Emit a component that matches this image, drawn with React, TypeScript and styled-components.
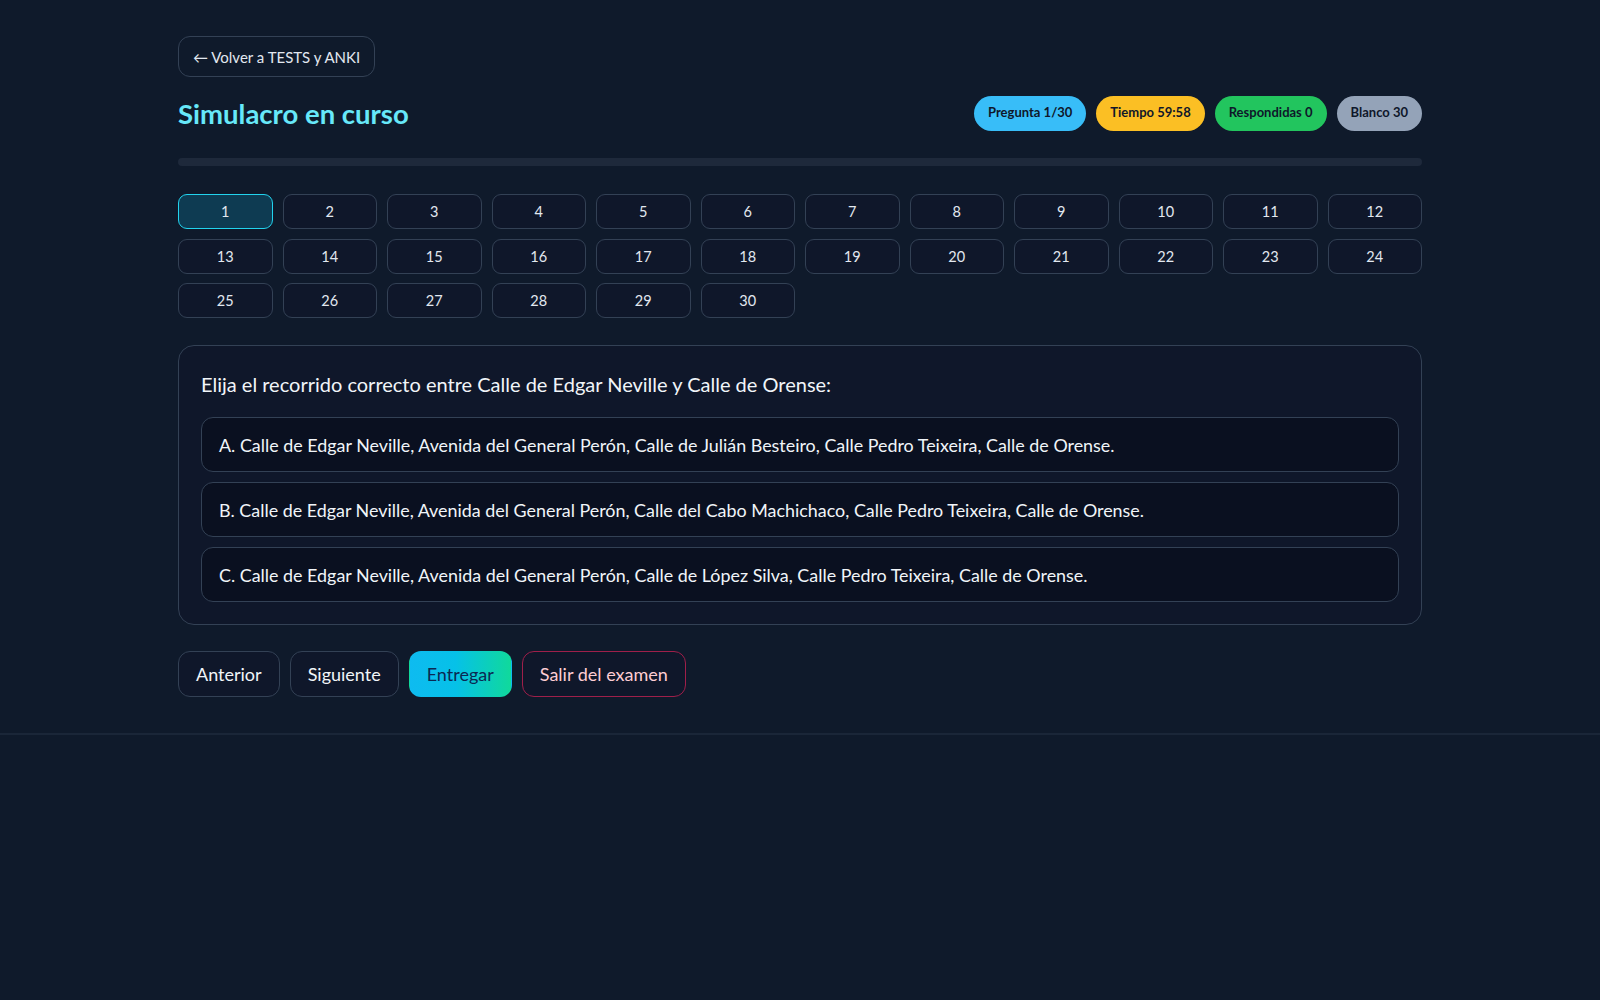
import styled, { createGlobalStyle } from 'styled-components';

const GlobalStyle = createGlobalStyle({
  'html, body': {
    margin: 0,
    padding: 0,
    background: '#0f1a2b',
    fontFamily: "Lato, 'Noto Sans', sans-serif",
    color: '#e2e8f0',
  },
  '*': {
    boxSizing: 'border-box',
  },
});

const Page = styled.div({
  minHeight: '1000px',
  background: '#0f1a2b',
});

const Main = styled.main({
  borderBottom: '2px solid #1a2638',
  padding: '36px 0 36px',
});

const Container = styled.div({
  width: '1244px',
  margin: '0 auto',
  display: 'flex',
  flexDirection: 'column',
});

const BackButton = styled.button({
  alignSelf: 'flex-start',
  height: '41px',
  padding: '0 14px',
  background: 'transparent',
  border: '1px solid #334155',
  borderRadius: '12px',
  color: '#e2e8f0',
  fontFamily: 'inherit',
  fontSize: '15px',
});

const HeaderRow = styled.div({
  display: 'flex',
  alignItems: 'center',
  justifyContent: 'space-between',
  marginTop: '19px',
});

const Title = styled.h1({
  margin: 0,
  fontSize: '27.5px',
  fontWeight: 700,
  color: '#67e8f9',
});

const Badges = styled.div({
  display: 'flex',
  gap: '10px',
});

const Badge = styled.span<{ $bg: string }>(({ $bg }) => ({
  display: 'inline-flex',
  alignItems: 'center',
  height: '35px',
  padding: '0 14px 3px',
  borderRadius: '999px',
  background: $bg,
  color: '#0f172a',
  fontSize: '13px',
  fontWeight: 700,
}));

const Progress = styled.div({
  height: '8px',
  marginTop: '27px',
  borderRadius: '999px',
  background: '#1e293b',
  overflow: 'hidden',
});

const ProgressFill = styled.div({
  height: '100%',
  background: 'linear-gradient(90deg, #06b6d4, #22c55e)',
});

const Grid = styled.div({
  display: 'grid',
  gridTemplateColumns: 'repeat(12, 1fr)',
  gap: '9.5px 10px',
  marginTop: '28px',
});

const NumButton = styled.button<{ $active?: boolean }>(({ $active }) => ({
  height: '35px',
  borderRadius: '9px',
  border: `1px solid ${$active ? '#22d3ee' : '#334155'}`,
  background: $active ? '#0e3b52' : '#0f172a',
  color: '#e2e8f0',
  fontFamily: 'inherit',
  fontSize: '14.5px',
}));

const Card = styled.section({
  marginTop: '27px',
  padding: '22px 22px 22px',
  border: '1px solid #334155',
  borderRadius: '16px',
  background: '#0f172a',
  display: 'flex',
  flexDirection: 'column',
  gap: '10px',
});

const Question = styled.p({
  margin: '0 0 7px',
  fontSize: '20px',
  lineHeight: '32px',
  color: '#f1f5f9',
});

const Option = styled.button({
  display: 'flex',
  alignItems: 'center',
  height: '55px',
  padding: '0 17px',
  border: '1px solid #334155',
  borderRadius: '12px',
  background: '#0a1020',
  color: '#f1f5f9',
  fontFamily: 'inherit',
  fontSize: '17.9px',
  textAlign: 'left',
});

const Actions = styled.div({
  display: 'flex',
  gap: '10px',
  marginTop: '26px',
});

const ActionButton = styled.button<{ $variant?: 'primary' | 'danger' }>(({ $variant }) => ({
  height: '46px',
  padding: '0 17px',
  borderRadius: '12px',
  fontFamily: 'inherit',
  fontSize: '18px',
  border: `1px solid ${
    $variant === 'danger' ? '#9f1f4a' : $variant === 'primary' ? 'transparent' : '#334155'
  }`,
  background:
    $variant === 'primary' ? 'linear-gradient(90deg, #0ebbf0 0%, #06c1e8 45%, #10d99b 100%)' : '#0f172a',
  color: $variant === 'primary' ? '#0b2852' : $variant === 'danger' ? '#fecdd3' : '#f1f5f9',
}));

const badges = [
  { label: 'Pregunta 1/30', color: '#38bdf8' },
  { label: 'Tiempo 59:58', color: '#fbbf24' },
  { label: 'Respondidas 0', color: '#22c55e' },
  { label: 'Blanco 30', color: '#94a3b8' },
];

const options = [
  'A. Calle de Edgar Neville, Avenida del General Perón, Calle de Julián Besteiro, Calle Pedro Teixeira, Calle de Orense.',
  'B. Calle de Edgar Neville, Avenida del General Perón, Calle del Cabo Machichaco, Calle Pedro Teixeira, Calle de Orense.',
  'C. Calle de Edgar Neville, Avenida del General Perón, Calle de López Silva, Calle Pedro Teixeira, Calle de Orense.',
];

function App() {
  const current = 1;
  const total = 30;
  const answered = 0;

  return (
    <Page>
      <GlobalStyle />
      <Main>
        <Container>
          <BackButton>← Volver a TESTS y ANKI</BackButton>

          <HeaderRow>
            <Title>Simulacro en curso</Title>
            <Badges>
              {badges.map((b) => (
                <Badge key={b.label} $bg={b.color}>
                  {b.label}
                </Badge>
              ))}
            </Badges>
          </HeaderRow>

          <Progress>
            <ProgressFill style={{ width: `${(answered / total) * 100}%` }} />
          </Progress>

          <Grid>
            {Array.from({ length: total }, (_, i) => (
              <NumButton key={i} $active={i + 1 === current}>
                {i + 1}
              </NumButton>
            ))}
          </Grid>

          <Card>
            <Question>Elija el recorrido correcto entre Calle de Edgar Neville y Calle de Orense:</Question>
            {options.map((o) => (
              <Option key={o}>{o}</Option>
            ))}
          </Card>

          <Actions>
            <ActionButton>Anterior</ActionButton>
            <ActionButton>Siguiente</ActionButton>
            <ActionButton $variant="primary">Entregar</ActionButton>
            <ActionButton $variant="danger">Salir del examen</ActionButton>
          </Actions>
        </Container>
      </Main>
    </Page>
  );
}

export default App;
